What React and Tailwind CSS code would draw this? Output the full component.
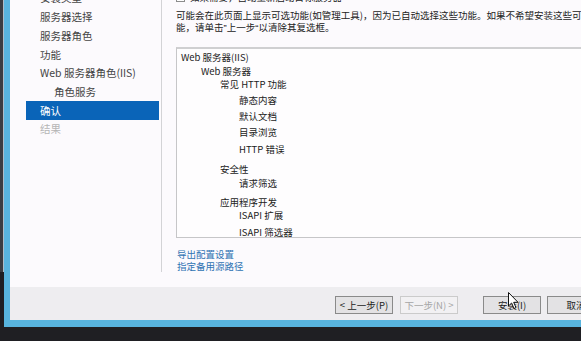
import React from "react";

const F = { fontFamily: '"Noto Sans CJK SC", "Noto Sans", sans-serif' };

function NavItem({ children, cls = "" }) {
  return (
    <div className={"h-[18.7px] flex items-center pl-[14px] " + cls}>{children}</div>
  );
}

function Btn({ children, disabled, cls = "" }) {
  return (
    <div
      className={
        "h-[18px] w-[58px] shrink-0 flex items-center justify-center text-[9.5px] border " +
        (disabled
          ? "border-[#cbcbcb] bg-[#f2f1f3] text-[#a5a5a5] "
          : "border-[#8a8a8a] bg-[#e3e2e4] text-[#222] ") +
        cls
      }
    >
      {children}
    </div>
  );
}

export default function App() {
  return (
    <div
      className="w-[581px] h-[341px] bg-[#1f1f23] overflow-hidden relative"
      style={F}
    >
      <div className="flex h-[327px]">
        <div className="w-[3px] shrink-0 flex flex-col">
          <div className="h-[272px] bg-[#3a3d42]"></div>
        </div>
        <div className="w-[1px] shrink-0 flex flex-col">
          <div className="h-[272px] bg-[#aebdc8]"></div>
        </div>
        <div className="w-[640px] shrink-0 border-l-[6px] border-b-[7px] border-[#58b4de] flex flex-col">
          <div className="h-[287px] bg-[#fcfafd] flex overflow-hidden">
            {/* Nav */}
            <div className="w-[151px] shrink-0 pl-[16px] pr-[2px] mt-[-11px] text-[10.5px] text-[#444]">
              <NavItem>安装类型</NavItem>
              <NavItem>服务器选择</NavItem>
              <NavItem>服务器角色</NavItem>
              <NavItem>功能</NavItem>
              <NavItem>Web 服务器角色(IIS)</NavItem>
              <NavItem cls="pl-[28px]">角色服务</NavItem>
              <NavItem cls="bg-[#0a64b8] text-white">确认</NavItem>
              <NavItem cls="text-[#b5b5b5]">结果</NavItem>
            </div>
            {/* separator */}
            <div className="w-[1px] shrink-0 h-[272px] bg-[#d3d3d6]"></div>
            {/* Content */}
            <div className="flex-1 pl-[14px] mt-[-9px] text-[9.5px] text-[#222] flex flex-col min-w-0">
              <div className="h-[13px] flex items-center gap-[5px] whitespace-nowrap">
                <div className="w-[9px] h-[9px] border border-[#8c8c8c] bg-white shrink-0"></div>
                <span>如果需要，自动重新启动目标服务器</span>
              </div>
              <div className="mt-[5px] leading-[12px] whitespace-nowrap">
                <div>可能会在此页面上显示可选功能(如管理工具)，因为已自动选择这些功能。如果不希望安装这些可选功</div>
                <div>
                  能，请单击
                  <span className="font-['Liberation_Sans',sans-serif]">”</span>
                  上一步
                  <span className="font-['Liberation_Sans',sans-serif]">“</span>
                  以清除其复选框。
                </div>
              </div>
              <div className="mt-[13px] h-[191px] border border-[#c6c6c8] border-t-[2px] border-t-[#cfcfd1] bg-[#fefdfe] overflow-hidden leading-[14px] whitespace-nowrap">
                <div className="mt-[1px] pl-[4px]">Web 服务器(IIS)</div>
                <div className="mt-0 pl-[24px]">Web 服务器</div>
                <div className="mt-[-1px] pl-[43px]">常见 HTTP 功能</div>
                <div className="mt-[2px] pl-[62px]">静态内容</div>
                <div className="mt-[2px] pl-[62px]">默认文档</div>
                <div className="mt-[2px] pl-[62px]">目录浏览</div>
                <div className="mt-[3px] pl-[62px]">HTTP 错误</div>
                <div className="mt-[6px] pl-[43px]">安全性</div>
                <div className="mt-0 pl-[62px]">请求筛选</div>
                <div className="mt-[5px] pl-[43px]">应用程序开发</div>
                <div className="mt-[-1px] pl-[62px]">ISAPI 扩展</div>
                <div className="mt-[3px] pl-[62px]">ISAPI 筛选器</div>
              </div>
              <div className="mt-[11px] leading-[11.5px] text-[#2f73b3] pl-[1px]">
                <div>导出配置设置</div>
                <div>指定备用源路径</div>
              </div>
            </div>
          </div>
          {/* Footer */}
          <div className="flex-1 bg-[#eeedf0] flex items-start pt-[9px] pl-[325px]">
            <Btn>&lt; 上一步(P)</Btn>
            <Btn disabled cls="ml-[7px]">下一步(N) &gt;</Btn>
            <Btn cls="ml-[25px]">安装(I)</Btn>
            <Btn cls="ml-[6px]">取消</Btn>
          </div>
        </div>
      </div>
      {/* mouse cursor */}
      <svg
        className="absolute left-[508px] top-[292px]"
        width="12"
        height="18"
        viewBox="0 0 12 18"
      >
        <path
          d="M0.5 0.5 L0.5 14 L3.6 11 L6 16.5 L8 15.6 L5.7 10.3 L10 10.3 Z"
          fill="#fff"
          stroke="#111"
          strokeWidth="1"
          strokeLinejoin="round"
        />
      </svg>
    </div>
  );
}
